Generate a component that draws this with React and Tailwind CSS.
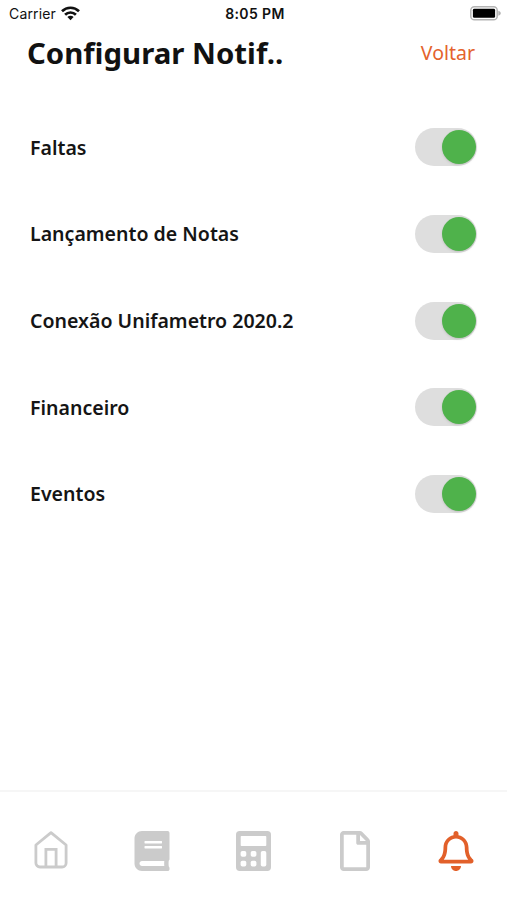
import React, { useState } from "react";
import { FaBook, FaRegBell, FaRegFile } from "react-icons/fa";

const OPTIONS = [
  { id: "faltas", label: "Faltas" },
  { id: "notas", label: "Lançamento de Notas" },
  { id: "conexao", label: "Conexão Unifametro 2020.2" },
  { id: "financeiro", label: "Financeiro" },
  { id: "eventos", label: "Eventos" },
];

function HomeIcon() {
  return (
    <svg width="34" height="38" viewBox="0 0 34 38" fill="none" stroke="currentColor" strokeWidth="2.8" strokeLinejoin="round">
      <path d="M1.9 14 17 1.6l15.1 12.4V32a4 4 0 0 1-4 4H5.9a4 4 0 0 1-4-4Z" />
      <path d="M11.9 36V18.3h10.2V36" strokeLinejoin="miter" />
    </svg>
  );
}

function CalculatorIcon() {
  return (
    <svg width="35" height="40" viewBox="0 0 35 40" fill="currentColor">
      <path
        fillRule="evenodd"
        d="M3.7 0h27.6A3.7 3.7 0 0 1 35 3.7v32.6a3.7 3.7 0 0 1-3.7 3.7H3.7A3.7 3.7 0 0 1 0 36.3V3.7A3.7 3.7 0 0 1 3.7 0ZM5.5 5a.8.8 0 0 0-.8.8v8.4a.8.8 0 0 0 .8.8h24a.8.8 0 0 0 .8-.8V5.8a.8.8 0 0 0-.8-.8Z"
      />
      <g fill="white">
        <rect x="4.6" y="20" width="5.7" height="5.7" rx="1.8" />
        <rect x="14.7" y="20" width="5.7" height="5.7" rx="1.8" />
        <rect x="4.6" y="29.8" width="5.7" height="5.7" rx="1.8" />
        <rect x="14.7" y="29.8" width="5.7" height="5.7" rx="1.8" />
        <rect x="24.8" y="20" width="5.5" height="15.5" rx="1.8" />
      </g>
    </svg>
  );
}

function WifiIcon() {
  return (
    <svg width="19" height="15" viewBox="0 0 19 15" fill="none" stroke="currentColor" strokeWidth="2.7">
      <path d="M1 5.2a12.2 12.2 0 0 1 17 0" />
      <path d="M4.1 8.7a7.7 7.7 0 0 1 10.8 0" />
      <path d="M9.5 14.2 6.4 11.1a4.4 4.4 0 0 1 6.2 0Z" fill="currentColor" stroke="none" />
    </svg>
  );
}

function BatteryIcon() {
  return (
    <svg width="31" height="15" viewBox="0 0 31 15">
      <rect x="0.8" y="0.8" width="26.4" height="13" rx="3.6" fill="none" stroke="#b4b4b4" strokeWidth="1.5" />
      <rect x="2.9" y="2.8" width="22.2" height="9" rx="1.4" fill="black" />
      <path d="M28.3 4.8c1.6.6 2.5 1.500 2.500 2.500s-.9 1.900-2.500 2.500Z" fill="#b4b4b4" />
    </svg>
  );
}

const TABS = [
  { id: "home", icon: <HomeIcon /> },
  { id: "book", icon: <FaBook size={40} /> },
  { id: "calculator", icon: <CalculatorIcon /> },
  { id: "file", icon: <FaRegFile size={40} /> },
  { id: "bell", icon: <FaRegBell size={40} /> },
];

function StatusBar() {
  return (
    <div className="grid h-[26px] grid-cols-3 items-center pl-[9px] pr-1.5 font-['Inter',sans-serif] text-[#111]">
      <div className="flex items-center gap-[5px] text-[14px] tracking-[0.15px]">
        <span>Carrier</span>
        <WifiIcon />
      </div>
      <div className="text-center text-[14px] font-semibold tracking-[0.4px]">8:05 PM</div>
      <div className="flex justify-end">
        <BatteryIcon />
      </div>
    </div>
  );
}

function Toggle({ label, checked, onChange }) {
  return (
    <button
      role="switch"
      aria-checked={checked}
      aria-label={label}
      onClick={onChange}
      className={`flex h-[38px] w-[62px] cursor-pointer items-center rounded-full bg-[#dedede] px-px ${
        checked ? "justify-end" : "justify-start"
      }`}
    >
      <span className={`size-[34px] rounded-full shadow-sm ${checked ? "bg-[#4fb24b]" : "bg-white"}`} />
    </button>
  );
}

export default function App() {
  const [enabled, setEnabled] = useState({
    faltas: true,
    notas: true,
    conexao: true,
    financeiro: true,
    eventos: true,
  });
  const [activeTab, setActiveTab] = useState("bell");

  const toggle = (id) => {
    setEnabled({ ...enabled, [id]: !enabled[id] });
  };

  return (
    <div className="flex h-[900px] w-[507px] flex-col overflow-hidden bg-white font-['Noto_Sans',sans-serif]">
      <StatusBar />

      <header className="flex h-[52px] items-center justify-between pl-[27px] pr-8 pt-0.5">
        <h1 className="whitespace-nowrap text-[29.4px] font-bold text-[#111]">Configurar Notif..</h1>
        <button className="cursor-pointer text-[19.5px] text-[#e4632d]">Voltar</button>
      </header>

      <main className="flex-1 pt-[26px]">
        {OPTIONS.map((option) => (
          <div key={option.id} className="flex h-[86.7px] items-center justify-between px-[30px]">
            <span className="whitespace-nowrap text-[19.56px] font-semibold text-[#151515]">{option.label}</span>
            <Toggle label={option.label} checked={enabled[option.id]} onChange={() => toggle(option.id)} />
          </div>
        ))}
      </main>

      <nav className="grid h-[110px] grid-cols-5 border-t-2 border-[#f6f6f6] pt-[39px]">
        {TABS.map((tab) => (
          <button
            key={tab.id}
            aria-label={tab.id}
            onClick={() => setActiveTab(tab.id)}
            className={`flex h-10 cursor-pointer items-start justify-center ${
              activeTab === tab.id ? "text-[#e2602a]" : "text-[#cbcbcb]"
            }`}
          >
            {tab.icon}
          </button>
        ))}
      </nav>
    </div>
  );
}
